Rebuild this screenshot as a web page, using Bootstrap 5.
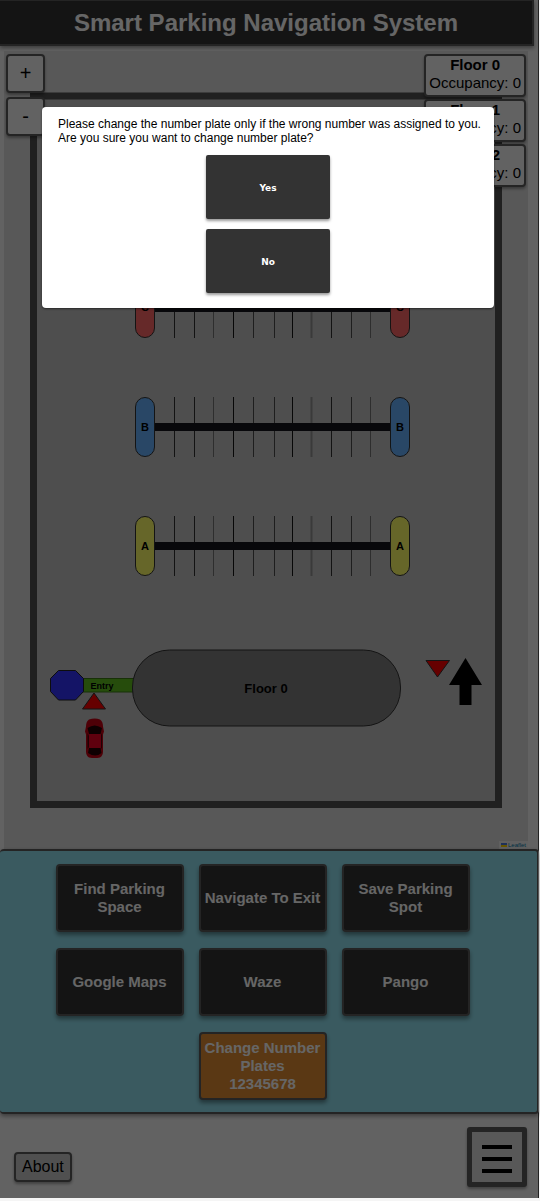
<!DOCTYPE html>
<html lang="en">
<head>
<meta charset="utf-8">
<meta name="viewport" content="width=device-width, initial-scale=1">
<title>Smart Parking Navigation System</title>
<link href="https://cdn.jsdelivr.net/npm/bootstrap@5.3.0/dist/css/bootstrap.min.css" rel="stylesheet">
<style>
  body { background: #f5f5f5; color: #000; font-family: "Liberation Sans", Arial, sans-serif; font-size: 15px; line-height: 18px; }
  .app-shell { margin: 0 1px 3px 0; border-right: 1px solid #222; }
  .app-header { background: #333; color: #fff; border: 2px solid #5a5a5a; border-width: 1px 2px 2px 0; margin-right: 4px; padding: 6px 0; box-shadow: 0 2px 4px rgba(0,0,0,.4); }
  .app-header h1 { font-size: 24px; line-height: 31px; font-weight: 700; }
  .map-area { margin: 5px 10px 0 4px; background: #dcdcdc; }
  .map-area svg text { font-weight: 700; text-anchor: middle; }
  .map-tools { top: 3px; left: 2px; gap: 4px; }
  .info-boxes { top: 3px; right: 2px; gap: 2px; }
  .tile { background: #f5f5f5; border: 2px solid #5a5a5a; border-radius: 4px; box-shadow: 0 2px 3px rgba(0,0,0,.35); color: #000; }
  .zoom-btn { width: 39px; height: 39px; font-size: 20px; padding: 0 0 2px; }
  .info-box { padding: 0 3px 3px; }
  .attribution { background: #f0f0f0; font-size: 6px; line-height: 8px; padding: 0 2px; gap: 1px; }
  .attribution a { color: #0078a8; text-decoration: none; }
  .action-panel { background: #91e1f0; border: 2px solid #5a5a5a; border-left-width: 0; border-radius: 4px; margin-right: -1px; padding: 13px 12px 12px 0; box-shadow: 0 2px 4px rgba(0,0,0,.4); }
  .action-grid { max-width: 424px; gap: 16px 15px; }
  .action-btn { width: 128px; height: 68px; padding: 0; background: #333; color: #fff; border: 2px solid #5a5a5a; border-radius: 4px; font-size: 15px; font-weight: 700; line-height: 18px; box-shadow: 0 3px 4px rgba(0,0,0,.4); }
  .action-btn.plates { background: #e18c32; }
  .page-foot { padding: 13px 11px 11px 14px; }
  .about-btn { background: #c8c8c8; padding: 4px 6px; margin-bottom: 5px; font-size: 16px; line-height: 18px; }
  .menu-btn { width: 60px; height: 60px; padding: 4px 0 0; background: #dcdcdc; border-width: 5px; border-radius: 3px; }
  .dim-layer { background: rgba(0,0,0,.6); z-index: 10; }
  .confirm-box { margin: 107px 44px 0 42px; background: #fff; border-radius: 4px; padding: 10px 0 15px; font-size: 12px; line-height: 14px; box-shadow: 0 1px 2px rgba(0,0,0,.5); }
  .confirm-box .message { padding: 0 4px 0 16px; }
  .confirm-box .choices { gap: 10px; margin-top: 10px; }
  .choice-btn { width: 124px; height: 64px; padding: 2px 0 0; border: 0; border-radius: 2px; background: #333; color: #fff; font: 700 9px "DejaVu Sans", sans-serif; box-shadow: 0 2px 3px rgba(0,0,0,.4); }
</style>
</head>
<body>
<div class="app-shell position-relative">
  <header class="app-header text-center"><h1 class="m-0">Smart Parking Navigation System</h1></header>

  <main>
    <section class="map-area position-relative" aria-label="Parking map">
      <svg class="d-block w-100 h-auto" viewBox="4 51 524 798" role="img" aria-label="Floor 0 plan">
        <defs>
          <g id="slots">
            <g stroke="#000" stroke-width="1">
              <path d="M174.500-30V30M194.500-30V30M331.500-30V30" opacity=".75"/>
              <path d="M213.500-30V30M370.500-30V30" opacity=".4"/>
              <path d="M233.500-30V30M292.500-30V30" opacity=".9"/>
              <path d="M253.500-30V30M274.500-30V30M351.500-30V30" opacity=".6"/>
              <path d="M311.500-30V30" stroke-width="2" opacity=".25"/>
            </g>
            <rect x="155" y="-4" width="235" height="8" fill="#15141c"/>
            <rect x="135.500" y="-29.500" width="19" height="59" rx="9.500" stroke="#333"/>
            <rect x="390.500" y="-29.500" width="19" height="59" rx="9.500" stroke="#333"/>
          </g>
        </defs>
        <rect x="33.500" y="96" width="465" height="708.500" fill="#c3c3c3" stroke="#505050" stroke-width="7"/>
        <g font-size="11">
          <use href="#slots" y="308" fill="#ff6666"/><text x="145" y="311">C</text><text x="400" y="311">C</text>
          <use href="#slots" y="427" fill="#66b2ff"/><text x="145" y="431">B</text><text x="400" y="431">B</text>
          <use href="#slots" y="546" fill="#ffff66"/><text x="145" y="550">A</text><text x="400" y="550">A</text>
        </g>
        <rect x="83" y="678.500" width="51" height="13.500" fill="#5fbf20" stroke="#3c7a14"/>
        <rect x="132.500" y="650" width="268" height="76" rx="37" fill="#808080" stroke="#333"/>
        <text x="102" y="689" font-size="9">Entry</text>
        <text x="266" y="693" font-size="13">Floor 0</text>
        <path d="M58.500 670.500h17l8 8v13l-8 8.500h-17l-8-8.500v-13z" fill="#3333ff" stroke="#222"/>
        <path d="M94 693l11.500 16h-23zM426 660.500h23.500L437.500 677z" fill="#f00" stroke="#333"/>
        <path d="M465.500 658l16.500 27h-10.500v20h-12v-20H449z"/>
        <g>
          <path d="M89 719.500q6-2 11 0 3 2 3 7l1 5-1 3v17q0 4-3 6-5 1-11 0-3-2-3-6v-17l-1-3 1-5q0-5 3-7z" fill="#c40012"/>
          <path d="M87.500 728q7-5 14.500 0l-1.500 6h-11.500zM89 748h11.500l1 5q-6 5-13.500 0z" fill="#250004"/>
          <path d="M87.500 733l1.500 3v11l-1.500 2zM102 733l-1.500 3v11l1.500 2z" fill="#500008"/>
          <rect x="89" y="734" width="12" height="14" rx="1" fill="#ee0025"/>
        </g>
      </svg>
      <div class="map-tools position-absolute d-flex flex-column">
        <button type="button" class="tile zoom-btn" aria-label="Zoom in">+</button>
        <button type="button" class="tile zoom-btn" aria-label="Zoom out">-</button>
      </div>
      <div class="info-boxes position-absolute d-flex flex-column text-center">
        <div class="tile info-box"><b class="d-block">Floor 0</b>Occupancy: 0</div>
        <div class="tile info-box"><b class="d-block">Floor 1</b>Occupancy: 0</div>
        <div class="tile info-box"><b class="d-block">Floor 2</b>Occupancy: 0</div>
      </div>
      <div class="attribution position-absolute bottom-0 end-0 d-flex align-items-center">
        <svg width="6" height="4" viewBox="0 0 6 4" aria-hidden="true"><path fill="#4c7be1" d="M0 0h6v2H0z"/><path fill="#ffd500" d="M0 2h6v2H0z"/></svg>
        <a href="#">Leaflet</a>
      </div>
    </section>

    <section class="action-panel position-relative">
      <div class="action-grid d-flex flex-wrap justify-content-center mx-auto">
        <button type="button" class="action-btn">Find Parking Space</button>
        <button type="button" class="action-btn">Navigate To Exit</button>
        <button type="button" class="action-btn">Save Parking Spot</button>
        <button type="button" class="action-btn">Google Maps</button>
        <button type="button" class="action-btn">Waze</button>
        <button type="button" class="action-btn">Pango</button>
        <button type="button" class="action-btn plates">Change Number Plates<br>12345678</button>
      </div>
    </section>
  </main>

  <footer class="page-foot d-flex justify-content-between align-items-end">
    <button type="button" class="tile about-btn">About</button>
    <button type="button" class="tile menu-btn" aria-label="Menu">
      <svg class="d-block mx-auto" width="30" height="30" viewBox="0 0 30 30" aria-hidden="true"><path d="M0 3h30M0 15h30M0 27h30" stroke="#000" stroke-width="4"/></svg>
    </button>
  </footer>

  <div class="dim-layer position-absolute top-0 start-0 w-100 h-100">
    <div class="confirm-box" role="dialog" aria-modal="true" aria-label="Change number plate">
      <div class="message">Please change the number plate only if the wrong number was assigned to you.<br>Are you sure you want to change number plate?</div>
      <div class="choices d-flex flex-column align-items-center">
        <button type="button" class="choice-btn">Yes</button>
        <button type="button" class="choice-btn">No</button>
      </div>
    </div>
  </div>
</div>
<script src="https://cdn.jsdelivr.net/npm/bootstrap@5.3.0/dist/js/bootstrap.bundle.min.js"></script>
</body>
</html>
